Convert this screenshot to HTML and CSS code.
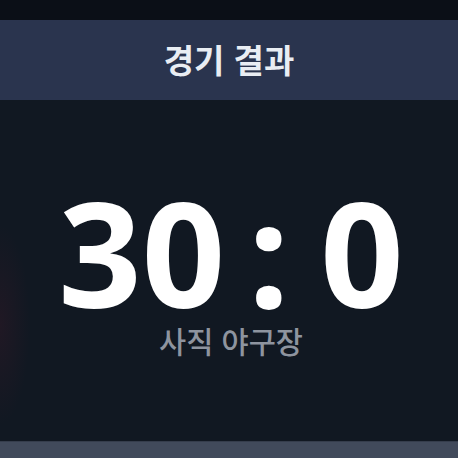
FILE: index.html
```html
<!DOCTYPE html>
<html lang="ko">
<head>
<meta charset="utf-8">
<title>경기 결과</title>
<link rel="stylesheet" href="styles.css">
</head>
<body>
<div class="screen">
  <div class="topbar"></div>
  <header class="header"><h1 class="title">경기 결과</h1></header>
  <main class="result">
    <div class="score">30 <span class="colon">:</span> 0</div>
    <div class="venue">사직 야구장</div>
  </main>
  <footer class="bottom"></footer>
</div>
</body>
</html>
```
FILE: styles.css
```css
html, body {
  margin: 0;
  padding: 0;
  background: #111822;
}
.screen {
  width: 458px;
  height: 458px;
  display: flex;
  flex-direction: column;
  overflow: hidden;
  font-family: "Noto Sans CJK KR", "Noto Sans", sans-serif;
}
.topbar {
  height: 20px;
  background: #0b0f17;
  flex: none;
}
.header {
  height: 80px;
  flex: none;
  background: #2a344e;
  display: flex;
  align-items: center;
  justify-content: center;
}
.title {
  margin: 0;
  font-size: 33px;
  font-weight: 700;
  color: #e9edf3;
  line-height: 1;
  padding-bottom: 2px;
}
.result {
  flex: 1;
  background:
    radial-gradient(ellipse 30px 100px at 0px 225px, rgba(100, 25, 45, 0.18), rgba(100, 25, 45, 0) 100%),
    #111822;
  display: flex;
  flex-direction: column;
  align-items: center;
  justify-content: flex-start;
  padding-top: 79px;
}
.score {
  font-family: "Noto Sans", "Open Sans", sans-serif;
  font-weight: 700;
  font-size: 146px;
  line-height: 1;
  color: #ffffff;
  white-space: pre;
  word-spacing: -15px;
  padding-left: 4px;
}
.colon {
  margin-right: 8px;
}
.venue {
  margin-top: 1px;
  font-size: 29.5px;
  font-weight: 500;
  color: #8e949f;
  line-height: 1;
  padding-left: 4px;
}
.bottom {
  height: 16px;
  flex: none;
  background: #414a5b;
  border-top: 1px solid #353d4c;
}
```
